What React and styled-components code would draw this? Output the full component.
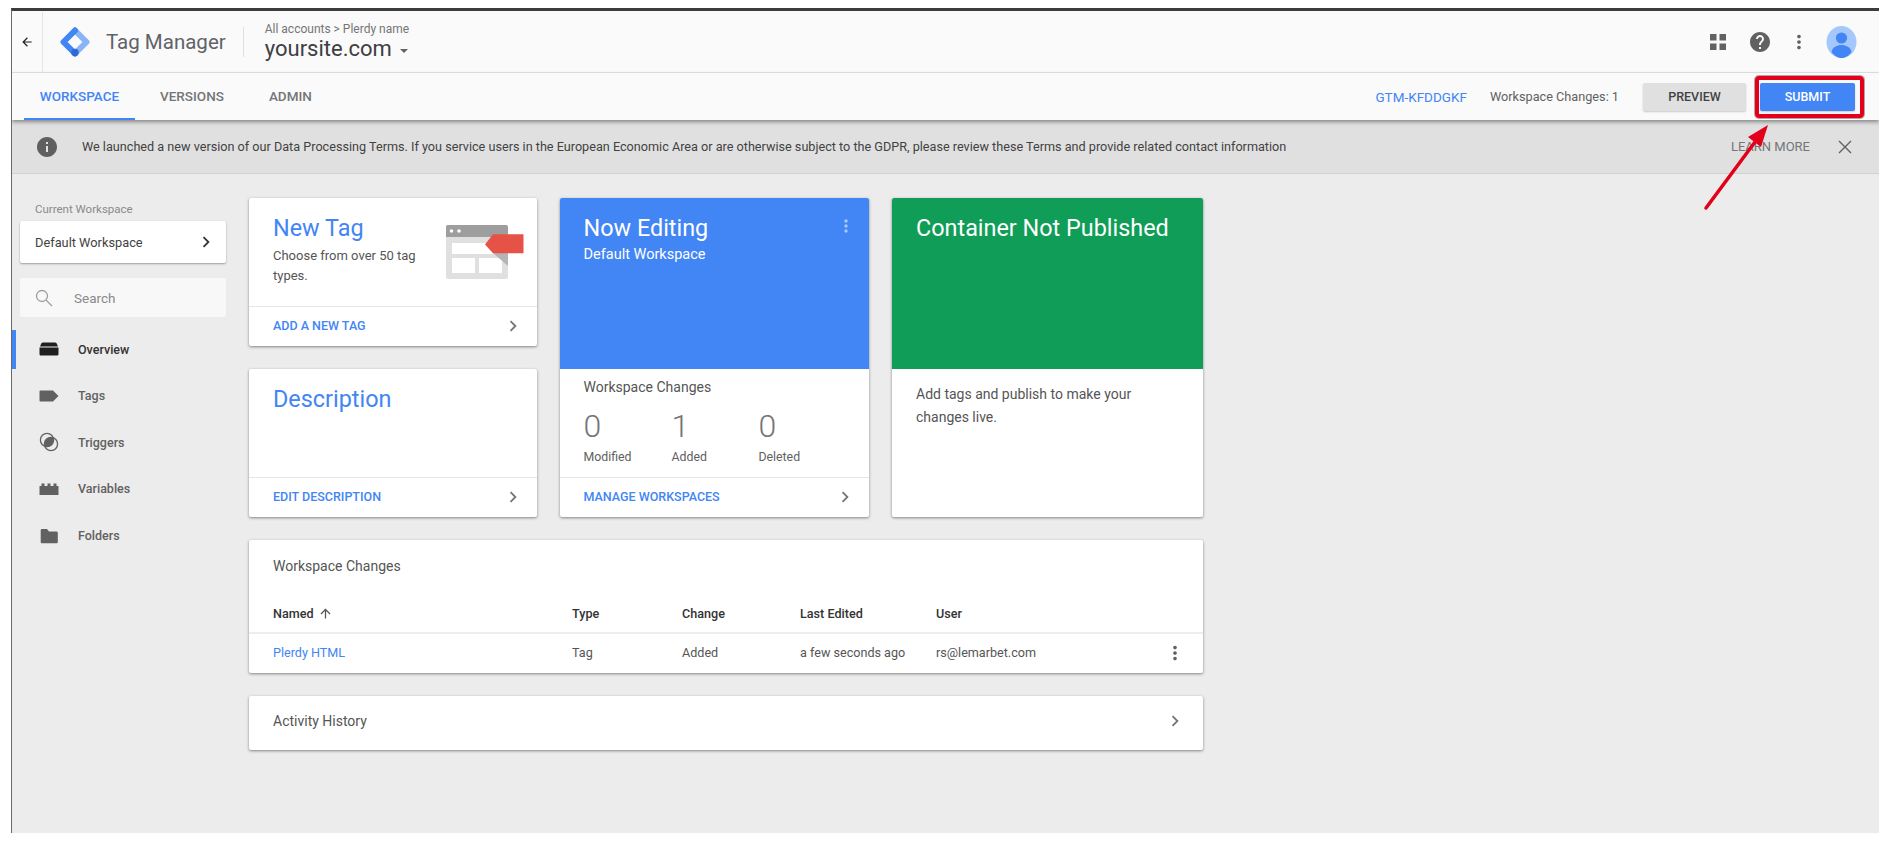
import styled, { createGlobalStyle } from 'styled-components';

const GlobalStyle = createGlobalStyle`
  html, body {
    margin: 0;
    height: 100%;
    overflow: hidden;
    background: #fff;
    font-family: Roboto, "Liberation Sans", sans-serif;
  }
`;

const Window = styled.div`
  position: relative;
  width: 1868px;
  height: 825px;
  margin: 8px 0 0 11px;
  box-sizing: border-box;
  border-top: 3px solid #3c3c3c;
  border-left: 1px solid #6a6a6a;
  background: #ececec;
  overflow: hidden;
`;

const TopBar = styled.header`
  display: flex;
  align-items: center;
  height: 62px;
  padding-top: 1px;
  box-sizing: border-box;
  background: #fafafa;
  border-bottom: 1px solid #e4e4e4;
`;

const BackCell = styled.div`
  display: flex;
  align-items: center;
  justify-content: center;
  width: 30px;
  height: 100%;
  border-right: 1px solid #e4e4e4;
  color: #212121;
`;

const LogoCell = styled.div`
  display: flex;
  align-items: center;
  gap: 16px;
  margin-left: 17px;
  padding-right: 17px;
  height: 30px;
  border-right: 1px solid #e0e0e0;
`;

const Brand = styled.span`
  font-size: 20.5px;
  color: #5f6368;
  white-space: nowrap;
`;

const Account = styled.div`
  display: flex;
  flex-direction: column;
  margin-left: 21px;
`;

const Crumb = styled.span`
  font-size: 12px;
  line-height: 14px;
  color: #757575;
`;

const Site = styled.span`
  display: flex;
  align-items: center;
  gap: 8px;
  font-size: 22px;
  line-height: 26px;
  color: #3c4043;
`;

const Caret = styled.i`
  width: 0;
  height: 0;
  border-left: 4px solid transparent;
  border-right: 4px solid transparent;
  border-top: 4px solid #5f6368;
  margin-top: 3px;
`;

const TopActions = styled.div`
  display: flex;
  align-items: center;
  margin-left: auto;
  margin-right: 22px;
  gap: 16px;
  color: #616161;
`;

const GridSlot = styled.span`
  display: flex;
  margin-right: 6px;
`;

const TabBar = styled.nav`
  position: relative;
  z-index: 1;
  display: flex;
  align-items: stretch;
  gap: 5px;
  height: 47px;
  padding-left: 12px;
  background: #fafafa;
  box-shadow: 0 2px 4px rgba(0, 0, 0, 0.4);
`;

const Tab = styled.a`
  display: flex;
  align-items: center;
  justify-content: center;
  padding: 0 ${(p) => (p.$active ? 0 : 20)}px;
  width: ${(p) => (p.$active ? '111px' : 'auto')};
  font-size: 13.5px;
  font-weight: 500;
  color: ${(p) => (p.$active ? '#4285f4' : '#757575')};
  border-bottom: 2px solid ${(p) => (p.$active ? '#4285f4' : 'transparent')};
  box-sizing: border-box;
`;

const TabRight = styled.div`
  display: flex;
  align-items: center;
  margin-left: auto;
  padding-right: 24px;
`;

const ContainerId = styled.span`
  font-size: 13.5px;
  color: #4285f4;
  margin-right: 23px;
`;

const ChangeCount = styled.span`
  font-size: 12.7px;
  color: #616161;
  margin-right: 24px;
`;

const Button = styled.button`
  height: 28px;
  width: ${(p) => p.$width}px;
  margin-left: ${(p) => p.$left || 0}px;
  border: 0;
  border-radius: 2px;
  padding: 0;
  font-family: inherit;
  font-size: 12.5px;
  font-weight: 500;
  color: ${(p) => (p.$primary ? '#fff' : '#424242')};
  background: ${(p) => (p.$primary ? '#4285f4' : '#e0e0e0')};
  box-shadow: 0 1px 2px rgba(0, 0, 0, 0.2);
`;

const Banner = styled.div`
  display: flex;
  align-items: center;
  height: 53px;
  background: #e0e0e0;
  border-bottom: 1px solid #d2d2d2;
  color: #424242;
`;

const BannerIcon = styled.span`
  display: flex;
  margin-left: 23px;
  margin-right: 23px;
  color: #5f5f5f;
`;

const BannerText = styled.span`
  font-size: 12.65px;
`;

const LearnMore = styled.span`
  margin-left: auto;
  font-size: 13px;
  color: #757575;
`;

const CloseBtn = styled.span`
  display: flex;
  margin: 0 27px 0 28px;
  color: #616161;
`;

const Body = styled.div`
  display: flex;
  align-items: flex-start;
  gap: 23px;
  padding-top: 24px;
`;

const Sidebar = styled.aside`
  width: 214px;
  flex: none;
`;

const SideTop = styled.div`
  padding-left: 8px;
`;

const SideLabel = styled.div`
  padding-left: 15px;
  font-size: 11.5px;
  line-height: 23px;
  color: #8a8a8a;
`;

const WorkspacePicker = styled.div`
  display: flex;
  align-items: center;
  justify-content: space-between;
  height: 42px;
  padding: 0 9px 0 15px;
  background: #fff;
  border-radius: 2px;
  box-shadow: 0 1px 2px rgba(0, 0, 0, 0.35);
  font-size: 12.8px;
  color: #424242;
`;

const SearchBox = styled.div`
  display: flex;
  align-items: center;
  gap: 21px;
  height: 39px;
  margin-top: 15px;
  padding-left: 15px;
  background: #f8f8f8;
  border-radius: 2px;
  font-size: 13.5px;
  color: #8a8a8a;
`;

const NavList = styled.div`
  display: flex;
  flex-direction: column;
  gap: 7.67px;
  margin-top: 13px;
`;

const NavItem = styled.div`
  display: flex;
  align-items: center;
  gap: 17px;
  height: 39px;
  padding: 0 0 1px 23px;
  box-sizing: border-box;
  border-left: 4px solid ${(p) => (p.$active ? '#4285f4' : 'transparent')};
  font-size: 12.5px;
  font-weight: 500;
  color: ${(p) => (p.$active ? '#333' : '#616161')};
`;

const NavGlyphSlot = styled.span`
  display: flex;
  justify-content: center;
  width: 24px;
  margin-left: -2px;
`;

const Main = styled.main`
  width: 954px;
`;

const CardGrid = styled.div`
  display: grid;
  grid-template-columns: 287.5px 309.5px 311px;
  grid-template-rows: 148px 148px;
  gap: 23px;
`;

const Card = styled.section`
  display: flex;
  flex-direction: column;
  background: #fff;
  border-radius: 2px;
  box-shadow: 0 1px 3px rgba(0, 0, 0, 0.45);
  overflow: hidden;
  grid-row: ${(p) => (p.$tall ? 'span 2' : 'auto')};
`;

const CardBody = styled.div`
  flex: 1;
  display: flex;
  justify-content: space-between;
  padding: 16px 13px 0 24px;
`;

const CardTitle = styled.h2`
  margin: 0;
  font-size: 23.4px;
  line-height: 28px;
  font-weight: 400;
  color: ${(p) => (p.$light ? '#fff' : '#4285f4')};
  white-space: nowrap;
`;

const CardText = styled.p`
  margin: 4px 0 0;
  width: 160px;
  font-size: 13px;
  line-height: 20px;
  color: #555;
`;

const CardFooter = styled.div`
  display: flex;
  align-items: center;
  justify-content: space-between;
  height: 40px;
  box-sizing: border-box;
  padding: 0 13px 2px 24px;
  border-top: 1px solid #e6e6e6;
  font-size: 12.5px;
  font-weight: 500;
  color: #4285f4;
  flex: none;
`;

const FooterChevron = styled.span`
  display: flex;
  color: #757575;
`;

const Hero = styled.div`
  display: flex;
  justify-content: space-between;
  height: 171px;
  box-sizing: border-box;
  padding: 16px 16px 0 24px;
  background: ${(p) => p.$color};
  color: #fff;
  flex: none;
`;

const HeroSub = styled.div`
  margin-top: 3px;
  font-size: 14.5px;
  font-weight: 400;
  line-height: 20px;
`;

const DotsSlot = styled.span`
  display: flex;
  margin: 2px -3px 0 0;
  color: ${(p) => p.$color || 'inherit'};
`;

const ChangesBody = styled.div`
  flex: 1;
  padding: 9px 24px 0;
`;

const ChangesHead = styled.div`
  font-size: 14px;
  line-height: 18px;
  color: #555;
`;

const Stats = styled.div`
  display: grid;
  grid-template-columns: 88px 87px 88px;
  margin-top: 10px;
`;

const StatNum = styled.div`
  font-size: 32px;
  line-height: 40px;
  font-weight: 300;
  color: #757575;
`;

const StatLabel = styled.div`
  margin-top: 2px;
  font-size: 12.3px;
  line-height: 18px;
  color: #616161;
`;

const PublishText = styled.p`
  margin: 14px 0 0;
  padding: 0 24px;
  font-size: 14px;
  line-height: 23px;
  color: #555;
`;

const WideCard = styled.section`
  margin-top: 23px;
  background: #fff;
  border-radius: 2px;
  box-shadow: 0 1px 3px rgba(0, 0, 0, 0.45);
`;

const WideTitle = styled.div`
  padding: 13px 24px 0;
  height: 48px;
  box-sizing: border-box;
  font-size: 14px;
  line-height: 26px;
  color: #555;
`;

const TableRow = styled.div`
  display: grid;
  grid-template-columns: 299px 110px 118px 136px 1fr 24px;
  align-items: center;
  padding: ${(p) => (p.$head ? '6px 16px 0 24px' : '0 16px 2px 24px')};
  height: ${(p) => p.$height}px;
  font-size: 12.6px;
  font-weight: ${(p) => (p.$head ? 500 : 400)};
  color: ${(p) => (p.$head ? '#333' : '#555')};
  border-bottom: ${(p) => (p.$head ? '2px solid #eee' : '0')};
  box-sizing: border-box;
`;

const SortName = styled.span`
  display: flex;
  align-items: center;
  gap: 4px;
`;

const TagLink = styled.span`
  color: #4285f4;
`;

const RowDots = styled.span`
  display: flex;
  justify-content: center;
  color: #616161;
`;

const ActivityRow = styled(WideCard)`
  display: flex;
  align-items: center;
  justify-content: space-between;
  height: 54px;
  box-sizing: border-box;
  padding: 0 16px 4px 24px;
  font-size: 14px;
  color: #555;
`;

const ActivityChevron = styled.span`
  display: flex;
  width: 24px;
  justify-content: center;
  color: #757575;
`;

const HighlightBox = styled.div`
  position: absolute;
  z-index: 2;
  left: 1742.5px;
  top: 65px;
  width: 109px;
  height: 42px;
  box-sizing: border-box;
  border: 4px solid #e2001a;
  border-radius: 4px;
  box-shadow: 0 0 0 1px rgba(60, 0, 0, 0.35);
  pointer-events: none;
`;

const ArrowMark = styled.svg`
  position: absolute;
  z-index: 2;
  left: 1688px;
  top: 109px;
  pointer-events: none;
`;

const TagArtSvg = styled.svg`
  margin-top: 11px;
  flex: none;
`;

const Icon = ({ d, size = 24, fill = 'currentColor' }) => (
  <svg width={size} height={size} viewBox="0 0 24 24" fill={fill}>
    <path d={d} />
  </svg>
);

const ICONS = {
  back: 'M20 11H7.83l5.59-5.59L12 4l-8 8 8 8 1.41-1.41L7.83 13H20v-2z',
  chevron: 'M10 6L8.59 7.41 13.17 12l-4.58 4.59L10 18l6-6z',
  dots: 'M12 8c1.1 0 2-.9 2-2s-.9-2-2-2-2 .9-2 2 .9 2 2 2zm0 2c-1.1 0-2 .9-2 2s.9 2 2 2 2-.9 2-2-.9-2-2-2zm0 6c-1.1 0-2 .9-2 2s.9 2 2 2 2-.9 2-2-.9-2-2-2z',
  help: 'M12 2C6.48 2 2 6.48 2 12s4.48 10 10 10 10-4.48 10-10S17.52 2 12 2zm1 17h-2v-2h2v2zm2.07-7.75l-.9.92C13.45 12.9 13 13.5 13 15h-2v-.5c0-1.1.45-2.1 1.17-2.83l1.24-1.26c.37-.36.59-.86.59-1.41 0-1.1-.9-2-2-2s-2 .9-2 2H8c0-2.21 1.79-4 4-4s4 1.79 4 4c0 .88-.36 1.68-.93 2.25z',
  info: 'M12 2C6.48 2 2 6.48 2 12s4.48 10 10 10 10-4.48 10-10S17.52 2 12 2zm1 15h-2v-6h2v6zm0-8h-2V7h2v2z',
  up: 'M4 12l1.41 1.41L11 7.83V20h2V7.83l5.58 5.59L20 12l-8-8-8 8z',
};

const GtmLogo = () => (
  <svg width="30" height="30" viewBox="0 0 30 30" fill="none">
    <path d="M15 3.5 26.5 15 15 26.5" stroke="#8ab4f8" strokeWidth="6" strokeLinecap="round" strokeLinejoin="round" />
    <path d="M15 3.5 3.5 15 15 26.5" stroke="#4285f4" strokeWidth="6" strokeLinecap="round" strokeLinejoin="round" />
    <circle cx="15" cy="25.5" r="3.7" fill="#2f6bd0" />
  </svg>
);

const GridIcon = () => (
  <svg width="16" height="16" viewBox="0 0 16 16" fill="#616161">
    <rect x="0" y="0" width="6.5" height="6.5" />
    <rect x="9.5" y="0" width="6.5" height="6.5" />
    <rect x="0" y="9.5" width="6.5" height="6.5" />
    <rect x="9.5" y="9.5" width="6.5" height="6.5" />
  </svg>
);

const Avatar = () => (
  <svg width="31" height="32" viewBox="0 0 30 32">
    <ellipse cx="15" cy="16" rx="15" ry="16" fill="#a4c8fb" />
    <circle cx="15" cy="12" r="5.6" fill="#4285f4" />
    <path d="M5 26c1-5 5.500-7 10-7s9 2 10 7c-2.500 3.400-6 6-10 6s-7.500-2.600-10-6z" fill="#4285f4" />
  </svg>
);

const SearchIcon = () => (
  <svg width="18" height="18" viewBox="0 0 18 18" fill="none" stroke="#9e9e9e" strokeWidth="1.3">
    <circle cx="7" cy="7" r="5.5" />
    <path d="M11 11l6 6" />
  </svg>
);

const CloseIcon = () => (
  <svg width="14" height="14" viewBox="0 0 14 14" fill="none" stroke="currentColor" strokeWidth="1.4">
    <path d="M1 1l12 12M13 1 1 13" />
  </svg>
);

const NavOverview = ({ color }) => (
  <svg width="20" height="16" viewBox="0 0 20 16" fill={color}>
    <path d="M4 1.500h12c.8 0 1.300.3 1.700 1L19 5.500H1l1.300-3c.4-.7.9-1 1.700-1zM.5 6.500h19V13c0 1-.8 1.500-1.500 1.500H2C1.200 14.500.5 14 .5 13z" />
  </svg>
);

const NavTag = ({ color }) => (
  <svg width="20" height="16" viewBox="0 0 20 16" fill={color}>
    <path d="M1.500 2.500h12.500L19.500 8 14 13.500H1.500C.9 13.500.5 13 .5 12.500v-9c0-.5.4-1 1-1z" />
  </svg>
);

const NavTrigger = ({ color }) => (
  <svg width="20" height="20" viewBox="0 0 20 20" fill="none">
    <defs>
      <clipPath id="trigger-overlap">
        <circle cx="8" cy="8" r="6.6" />
      </clipPath>
    </defs>
    <circle cx="8" cy="8" r="6.6" stroke={color} strokeWidth="1.3" />
    <circle cx="12" cy="12" r="6.6" stroke={color} strokeWidth="1.3" />
    <circle cx="12" cy="12" r="6.6" fill={color} clipPath="url(#trigger-overlap)" />
  </svg>
);

const NavVariable = ({ color }) => (
  <svg width="20" height="14" viewBox="0 0 20 14" fill={color}>
    <path d="M.5 13V4h2V1.500h3V4h3V1.500h3V4h3V1.500h3V4h2v9z" />
  </svg>
);

const NavFolder = ({ color }) => (
  <svg width="18" height="16" viewBox="0 0 18 16" fill={color}>
    <path d="M2 1h5l2 2.500h7.500c.7 0 1.300.6 1.300 1.300V14c0 .7-.6 1.300-1.300 1.300H2c-.8 0-1.300-.6-1.300-1.300V2.300C.7 1.600 1.200 1 2 1z" />
  </svg>
);

const TagArt = () => (
  <TagArtSvg width="78" height="54" viewBox="0 0 78 54">
    <rect x="0" y="0" width="62" height="54" rx="2" fill="#e0e0e0" />
    <path d="M2 0h58a2 2 0 0 1 2 2v10H0V2a2 2 0 0 1 2-2z" fill="#9e9e9e" />
    <circle cx="5.500" cy="6" r="1.800" fill="#fff" />
    <circle cx="13" cy="6" r="1.800" fill="#fff" />
    <rect x="6" y="18" width="50" height="11" fill="#fff" />
    <rect x="6" y="33" width="23" height="15" fill="#fff" />
    <rect x="33" y="33" width="23" height="15" fill="#fff" />
    <path d="M47 28h15v13z" fill="#b5b5b5" />
    <path d="M39 19.500 47 9.300h30.500v19H47z" fill="#e65245" />
  </TagArtSvg>
);

const NAV = [
  { label: 'Overview', Glyph: NavOverview, active: true },
  { label: 'Tags', Glyph: NavTag },
  { label: 'Triggers', Glyph: NavTrigger },
  { label: 'Variables', Glyph: NavVariable },
  { label: 'Folders', Glyph: NavFolder },
];

const App = () => {
  return (
    <>
      <GlobalStyle />
      <Window>
        <TopBar>
          <BackCell><Icon d={ICONS.back} size={14} /></BackCell>
          <LogoCell>
            <GtmLogo />
            <Brand>Tag Manager</Brand>
          </LogoCell>
          <Account>
            <Crumb>All accounts &gt; Plerdy name</Crumb>
            <Site>yoursite.com <Caret /></Site>
          </Account>
          <TopActions>
            <GridSlot><GridIcon /></GridSlot>
            <Icon d={ICONS.help} size={24} />
            <Icon d={ICONS.dots} size={22} />
            <Avatar />
          </TopActions>
        </TopBar>

        <TabBar>
          <Tab $active>WORKSPACE</Tab>
          <Tab>VERSIONS</Tab>
          <Tab>ADMIN</Tab>
          <TabRight>
            <ContainerId>GTM-KFDDGKF</ContainerId>
            <ChangeCount>Workspace Changes: 1</ChangeCount>
            <Button $width={103}>PREVIEW</Button>
            <Button $primary $width={95} $left={14}>SUBMIT</Button>
          </TabRight>
        </TabBar>

        <Banner>
          <BannerIcon><Icon d={ICONS.info} size={24} /></BannerIcon>
          <BannerText>
            We launched a new version of our Data Processing Terms. If you service users in the European Economic Area or are otherwise subject to the GDPR, please review these Terms and provide related contact information
          </BannerText>
          <LearnMore>LEARN MORE</LearnMore>
          <CloseBtn><CloseIcon /></CloseBtn>
        </Banner>

        <Body>
          <Sidebar>
            <SideTop>
              <SideLabel>Current Workspace</SideLabel>
              <WorkspacePicker>
                Default Workspace
                <Icon d={ICONS.chevron} size={22} fill="#333" />
              </WorkspacePicker>
              <SearchBox>
                <SearchIcon />
                Search
              </SearchBox>
            </SideTop>
            <NavList>
              {NAV.map(({ label, Glyph, active }) => (
                <NavItem key={label} $active={active}>
                  <NavGlyphSlot>
                    <Glyph color={active ? '#1f1f1f' : '#616161'} />
                  </NavGlyphSlot>
                  {label}
                </NavItem>
              ))}
            </NavList>
          </Sidebar>

          <Main>
            <CardGrid>
              <Card>
                <CardBody>
                  <div>
                    <CardTitle>New Tag</CardTitle>
                    <CardText>Choose from over 50 tag types.</CardText>
                  </div>
                  <TagArt />
                </CardBody>
                <CardFooter>
                  ADD A NEW TAG
                  <FooterChevron><Icon d={ICONS.chevron} size={22} /></FooterChevron>
                </CardFooter>
              </Card>

              <Card $tall>
                <Hero $color="#4285f4">
                  <div>
                    <CardTitle $light>Now Editing</CardTitle>
                    <HeroSub>Default Workspace</HeroSub>
                  </div>
                  <DotsSlot $color="#a9c7fa"><Icon d={ICONS.dots} size={20} /></DotsSlot>
                </Hero>
                <ChangesBody>
                  <ChangesHead>Workspace Changes</ChangesHead>
                  <Stats>
                    <div><StatNum>0</StatNum><StatLabel>Modified</StatLabel></div>
                    <div><StatNum>1</StatNum><StatLabel>Added</StatLabel></div>
                    <div><StatNum>0</StatNum><StatLabel>Deleted</StatLabel></div>
                  </Stats>
                </ChangesBody>
                <CardFooter>
                  MANAGE WORKSPACES
                  <FooterChevron><Icon d={ICONS.chevron} size={22} /></FooterChevron>
                </CardFooter>
              </Card>

              <Card $tall>
                <Hero $color="#0f9d58">
                  <CardTitle $light>Container Not Published</CardTitle>
                </Hero>
                <PublishText>Add tags and publish to make your changes live.</PublishText>
              </Card>

              <Card>
                <CardBody>
                  <CardTitle>Description</CardTitle>
                </CardBody>
                <CardFooter>
                  EDIT DESCRIPTION
                  <FooterChevron><Icon d={ICONS.chevron} size={22} /></FooterChevron>
                </CardFooter>
              </Card>
            </CardGrid>

            <WideCard>
              <WideTitle>Workspace Changes</WideTitle>
              <TableRow $head $height={46}>
                <SortName>Named <Icon d={ICONS.up} size={15} fill="#555" /></SortName>
                <span>Type</span>
                <span>Change</span>
                <span>Last Edited</span>
                <span>User</span>
                <span />
              </TableRow>
              <TableRow $height={39}>
                <TagLink>Plerdy HTML</TagLink>
                <span>Tag</span>
                <span>Added</span>
                <span>a few seconds ago</span>
                <span>rs@lemarbet.com</span>
                <RowDots><Icon d={ICONS.dots} size={22} /></RowDots>
              </TableRow>
            </WideCard>

            <ActivityRow>
              Activity History
              <ActivityChevron><Icon d={ICONS.chevron} size={22} /></ActivityChevron>
            </ActivityRow>
          </Main>
        </Body>

        <HighlightBox />
        <ArrowMark width="80" height="95" viewBox="0 0 80 95">
          <path d="M6 88 55 22" stroke="#e2001a" strokeWidth="3.5" strokeLinecap="round" fill="none" />
          <path d="M68 5 48 17 61 27z" fill="#e2001a" />
        </ArrowMark>
      </Window>
    </>
  );
};

export default App;
